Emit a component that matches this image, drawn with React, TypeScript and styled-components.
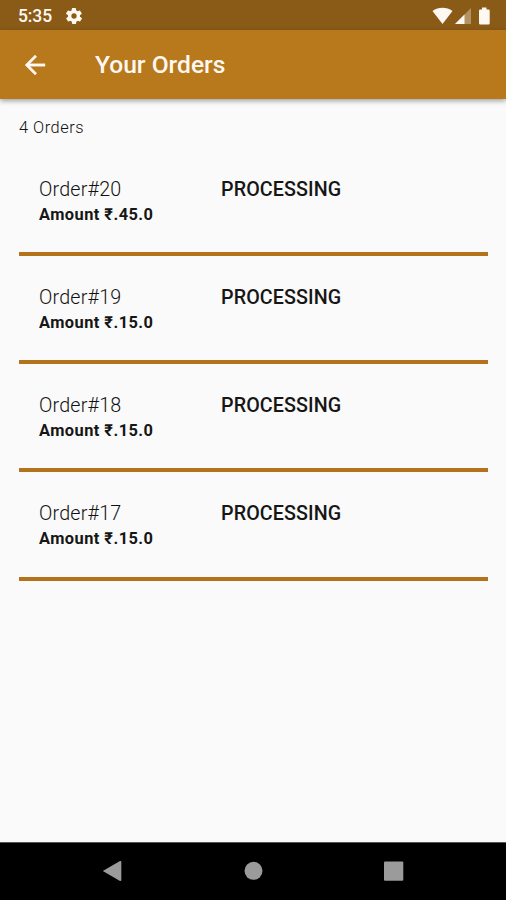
import styled, { createGlobalStyle } from "styled-components";

const GlobalStyle = createGlobalStyle`
  * {
    box-sizing: border-box;
  }
  body {
    margin: 0;
    background-color: #fafafa;
    font-family: Roboto, "Noto Sans", sans-serif;
  }
  h1, h2, p, ul {
    margin: 0;
    padding: 0;
  }
`;

const Screen = styled.div`
  display: flex;
  flex-direction: column;
  width: 506px;
  height: 900px;
  overflow: hidden;
  background-color: #fafafa;
`;

const StatusBar = styled.div`
  display: flex;
  align-items: center;
  height: 30px;
  padding: 1px 16px 0 18px;
  background-color: #8a5b17;
  color: #fff8f2;
`;

const Clock = styled.span`
  width: 48px;
  font-size: 17.5px;
  font-weight: 500;
  letter-spacing: -0.1px;
`;

const StatusIcons = styled.div`
  display: flex;
  align-items: center;
  margin-left: auto;
`;

const AppBar = styled.header`
  display: flex;
  align-items: center;
  flex-shrink: 0;
  height: 69px;
  padding-left: 20px;
  background-color: #b7791c;
  color: #fff8f2;
  box-shadow: 0 2px 5px rgba(0, 0, 0, 0.36);
`;

const BackButton = styled.button`
  display: flex;
  width: 75px;
  padding: 0;
  border: none;
  background: none;
  color: inherit;
`;

const Title = styled.h1`
  font-size: 24.6px;
  font-weight: 500;
  line-height: 30px;
`;

const Content = styled.main`
  flex: 1;
  padding: 18px 18px 0 19px;
`;

const Count = styled.p`
  font-size: 16.4px;
  font-weight: 300;
  line-height: 22px;
  letter-spacing: 0.5px;
  color: #111;
`;

const OrderList = styled.ul`
  padding-top: 8.8px;
  list-style: none;
`;

const OrderRow = styled.li`
  display: flex;
  height: 108.2px;
  padding: 28.8px 20px 0;
  border-bottom: 4px solid #b3731a;
`;

const OrderInfo = styled.div`
  width: 182px;
`;

const OrderName = styled.h2`
  font-size: 19.7px;
  font-weight: 300;
  line-height: 26px;
  letter-spacing: 0.2px;
  color: #111;
`;

const Amount = styled.p`
  font-size: 16.4px;
  font-weight: 700;
  line-height: 24px;
  letter-spacing: 0.45px;
  color: #161616;
`;

const Status = styled.span`
  font-size: 19.7px;
  font-weight: 500;
  line-height: 26px;
  letter-spacing: 0.1px;
  color: #161616;
`;

const NavBar = styled.nav`
  display: flex;
  align-items: center;
  justify-content: space-between;
  flex-shrink: 0;
  height: 58px;
  padding: 0 102px 2px;
  border-top: 1px solid #555;
  background-color: #000;
`;

interface IOrder {
  id: number;
  amount: string;
  status: string;
}

const orders: IOrder[] = [
  { id: 20, amount: "45.0", status: "PROCESSING" },
  { id: 19, amount: "15.0", status: "PROCESSING" },
  { id: 18, amount: "15.0", status: "PROCESSING" },
  { id: 17, amount: "15.0", status: "PROCESSING" },
];

const GearIcon = () => (
  <svg width="16" height="16" viewBox="2 2 20 20" fill="currentColor">
    <path
      fillRule="evenodd"
      d="M19.4 13a7.5 7.5 0 0 0 0-2l2.1-1.6a.5.5 0 0 0 .1-.7l-2-3.4a.5.5 0 0 0-.6-.2l-2.5 1a7.3 7.3 0 0 0-1.7-1l-.4-2.6a.5.5 0 0 0-.5-.5h-4a.5.5 0 0 0-.5.5L9 5.1a7.3 7.3 0 0 0-1.7 1l-2.5-1a.5.5 0 0 0-.6.2l-2 3.4a.5.5 0 0 0 .1.7L4.6 11a7.5 7.5 0 0 0 0 2l-2.1 1.6a.5.5 0 0 0-.1.7l2 3.4c.1.2.4.3.6.2l2.5-1a7.3 7.3 0 0 0 1.7 1l.4 2.6c0 .3.2.5.5.5h4c.3 0 .5-.2.5-.5l.4-2.6a7.3 7.3 0 0 0 1.7-1l2.5 1c.2.1.5 0 .6-.2l2-3.4a.5.5 0 0 0-.1-.7zM12 15.3a3.300 3.300 0 1 1 0-6.600 3.300 3.300 0 0 1 0 6.600z"
    />
  </svg>
);

const SignalIcons = () => (
  <svg width="58" height="20" viewBox="0 0 58 20" fill="currentColor">
    {/* wifi */}
    <path d="M.5 5C6.500.8 14.500.8 20.500 5l-10 13z" />
    {/* mobile signal, half strength */}
    <path d="M39 2v16H23z" opacity="0.35" />
    <path d="M32.500 8.500V18H23z" />
    {/* battery */}
    <path d="M50 1.500h4.500v2h2q1.200 0 1.200 1.200v12.600q0 1.200-1.200 1.200h-8.300q-1.200 0-1.200-1.200V4.700q0-1.200 1.200-1.200H50z" />
  </svg>
);

const BackIcon = () => (
  <svg width="30" height="30" viewBox="0 0 24 24" fill="currentColor">
    <path
      d="M20 11H7.830l5.590-5.590L12 4l-8 8 8 8 1.410-1.410L7.830 13H20v-2z"
      stroke="currentColor"
      strokeWidth="0.3"
    />
  </svg>
);

function App() {
  return (
    <Screen>
      <GlobalStyle />
      <StatusBar>
        <Clock>5:35</Clock>
        <GearIcon />
        <StatusIcons>
          <SignalIcons />
        </StatusIcons>
      </StatusBar>
      <AppBar>
        <BackButton aria-label="Back">
          <BackIcon />
        </BackButton>
        <Title>Your Orders</Title>
      </AppBar>
      <Content>
        <Count>{orders.length} Orders</Count>
        <OrderList>
          {orders.map((order) => (
            <OrderRow key={order.id}>
              <OrderInfo>
                <OrderName>Order#{order.id}</OrderName>
                <Amount>Amount ₹.{order.amount}</Amount>
              </OrderInfo>
              <Status>{order.status}</Status>
            </OrderRow>
          ))}
        </OrderList>
      </Content>
      <NavBar>
        <svg width="20" height="22" fill="#9b9b9b">
          <path d="M.8 11L18 1q1.300-.4 1.300 1v18q0 1.400-1.300 1z" />
        </svg>
        <svg width="20" height="20" fill="#9b9b9b">
          <circle cx="10.500" cy="9.800" r="9" />
        </svg>
        <svg width="20" height="20" fill="#9b9b9b">
          <rect x="0" y="0.500" width="19.300" height="19.300" rx="1" />
        </svg>
      </NavBar>
    </Screen>
  );
}

export default App;
